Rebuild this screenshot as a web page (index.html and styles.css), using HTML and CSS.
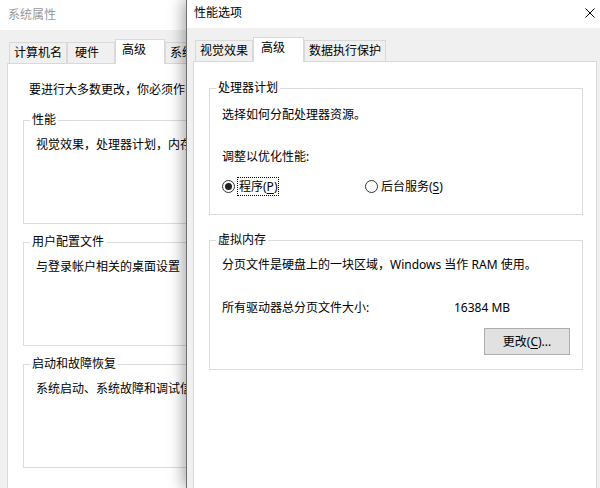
FILE: index.html
```html
<!DOCTYPE html>
<html lang="zh-CN">

<head>
    <meta charset="UTF-8">
    <meta name="viewport" content="width=device-width, initial-scale=1.0">
    <title>性能选项</title>
    <link rel="stylesheet" href="styles.css">
</head>

<body>
    <!-- background dialog, mostly hidden behind the front one -->
    <div class="window window-back">
        <div class="titlebar">
            <span class="title">系统属性</span>
        </div>
        <div class="tabs">
            <div class="tab">计算机名</div>
            <div class="tab tab-narrow">硬件</div>
            <div class="tab active">高级</div>
            <div class="tab">系统</div>
        </div>
        <div class="panel">
            <p class="intro">要进行大多数更改，你必须作</p>

            <fieldset class="group">
                <legend>性能</legend>
                <p class="desc">视觉效果，处理器计划，内存</p>
            </fieldset>

            <fieldset class="group">
                <legend>用户配置文件</legend>
                <p class="desc">与登录帐户相关的桌面设置</p>
            </fieldset>

            <fieldset class="group">
                <legend>启动和故障恢复</legend>
                <p class="desc">系统启动、系统故障和调试信</p>
            </fieldset>
        </div>
    </div>

    <!-- foreground dialog -->
    <div class="window window-front">
        <div class="titlebar">
            <span class="title">性能选项</span>
            <svg class="close" width="10" height="10" viewBox="0 0 10 10">
                <path d="M0.5 0.5L9.5 9.5M9.5 0.5L0.5 9.5" stroke="#000" stroke-width="1" fill="none" />
            </svg>
        </div>
        <div class="tabs">
            <div class="tab">视觉效果</div>
            <div class="tab active">高级</div>
            <div class="tab">数据执行保护</div>
        </div>
        <div class="panel">
            <fieldset class="group cpu">
                <legend>处理器计划</legend>
                <p>选择如何分配处理器资源。</p>
                <p class="adjust">调整以优化性能:</p>
                <div class="radio-row">
                    <label class="radio">
                        <span class="circle checked"></span>
                        <span class="focus">程序(<u>P</u>)</span>
                    </label>
                    <label class="radio">
                        <span class="circle"></span>
                        <span class="radio-text">后台服务(<u>S</u>)</span>
                    </label>
                </div>
            </fieldset>

            <fieldset class="group memory">
                <legend>虚拟内存</legend>
                <p>分页文件是硬盘上的一块区域，Windows 当作 RAM 使用。</p>
                <div class="size-row">
                    <span>所有驱动器总分页文件大小:</span>
                    <span>16384 MB</span>
                </div>
                <div class="button-row">
                    <button class="btn">更改(<u>C</u>)...</button>
                </div>
            </fieldset>
        </div>
    </div>
</body>

</html>
```

FILE: styles.css
```css
* {
    box-sizing: border-box;
}

html,
body {
    margin: 0;
    padding: 0;
}

body {
    width: 600px;
    height: 488px;
    overflow: hidden;
    position: relative;
    font-family: "Segoe UI", "Noto Sans", "Noto Sans CJK SC", sans-serif;
    font-size: 12px;
    line-height: 16px;
    color: #000;
    background: #f0f0f0;
}

p {
    margin: 0;
    white-space: nowrap;
}

.window {
    background: #f0f0f0;
    height: 488px;
    overflow: hidden;
}

.titlebar {
    background: #fff;
    display: flex;
    align-items: center;
}

/* tabs */
.tabs {
    height: 33px;
    display: flex;
    align-items: flex-end;
}

.tab {
    height: 21px;
    padding: 2px 4px 0;
    border: 1px solid #d9d9d9;
    border-bottom: none;
    white-space: nowrap;
}

.tab-narrow {
    min-width: 48px;
    padding-left: 7px;
}

.tab.active {
    height: 25px;
    min-width: 51px;
    margin-bottom: -1px;
    padding: 2px 0 0 7px;
    background: #fff;
    position: relative;
    z-index: 1;
}

.panel {
    background: #fff;
    border: 1px solid #d9d9d9;
    height: 500px;
}

/* group boxes */
.group {
    margin: 0;
    border: 1px solid #dcdcdc;
    padding: 9px 12px 0;
    min-width: 0;
}

.group legend {
    padding: 0 2px;
    margin-left: -6px;
    line-height: 16px;
}

/* background dialog */
.window-back {
    width: 190px;
}

.window-back .titlebar {
    height: 30px;
    padding-left: 8px;
    color: #999;
}

.window-back .tabs {
    padding-left: 9px;
}

.window-back .tab.active {
    min-width: 50px;
    padding-left: 6px;
}

.window-back .panel {
    margin-left: 7px;
    width: 400px;
    padding: 18px 0 0 15px;
}

.intro {
    padding-left: 6px;
    margin-bottom: 14px;
}

.window-back .group + .group {
    margin-top: 10px;
}

.desc {
    height: 86px;
}

/* foreground dialog */
.window-front {
    position: absolute;
    top: 0;
    left: 186px;
    width: 424px;
    border-left: 1px solid #6f6f6f;
    box-shadow: -3px 0 14px rgba(0, 0, 0, 0.35);
}

.window-front .titlebar {
    height: 28px;
    padding: 0 15px 2px 7px;
    justify-content: space-between;
}

.window-front .tabs {
    padding-left: 8px;
}

.window-front .panel {
    margin-left: 6px;
    width: 404px;
    padding: 18px 13px 0 15px;
}

.cpu {
    padding: 11px 12px 18px;
}

.adjust {
    margin-top: 26px;
}

.radio-row {
    display: flex;
    margin-top: 12px;
    height: 19px;
}

.radio {
    display: flex;
    align-items: center;
}

.radio:first-child {
    width: 143px;
}

.circle {
    width: 13px;
    height: 13px;
    border: 1px solid #333;
    border-radius: 50%;
    margin-right: 2px;
    display: flex;
    align-items: center;
    justify-content: center;
}

.circle.checked::after {
    content: "";
    width: 7px;
    height: 7px;
    border-radius: 50%;
    background: #222;
}

.focus {
    border: 1px dotted #000;
    padding: 0 1px;
    line-height: 17px;
}

.radio-text {
    padding-left: 1px;
}

u {
    text-decoration-thickness: 1px;
    text-underline-offset: 2px;
}

.memory {
    margin-top: 17px;
    padding: 9px 12px 14px;
}

.size-row {
    display: grid;
    grid-template-columns: 232px auto;
    margin-top: 27px;
}

.button-row {
    display: flex;
    justify-content: flex-end;
    margin-top: 12px;
}

.btn {
    width: 86px;
    height: 27px;
    background: #e1e1e1;
    border: 1px solid #adadad;
    font: inherit;
    color: #000;
    padding: 0;
}
```
